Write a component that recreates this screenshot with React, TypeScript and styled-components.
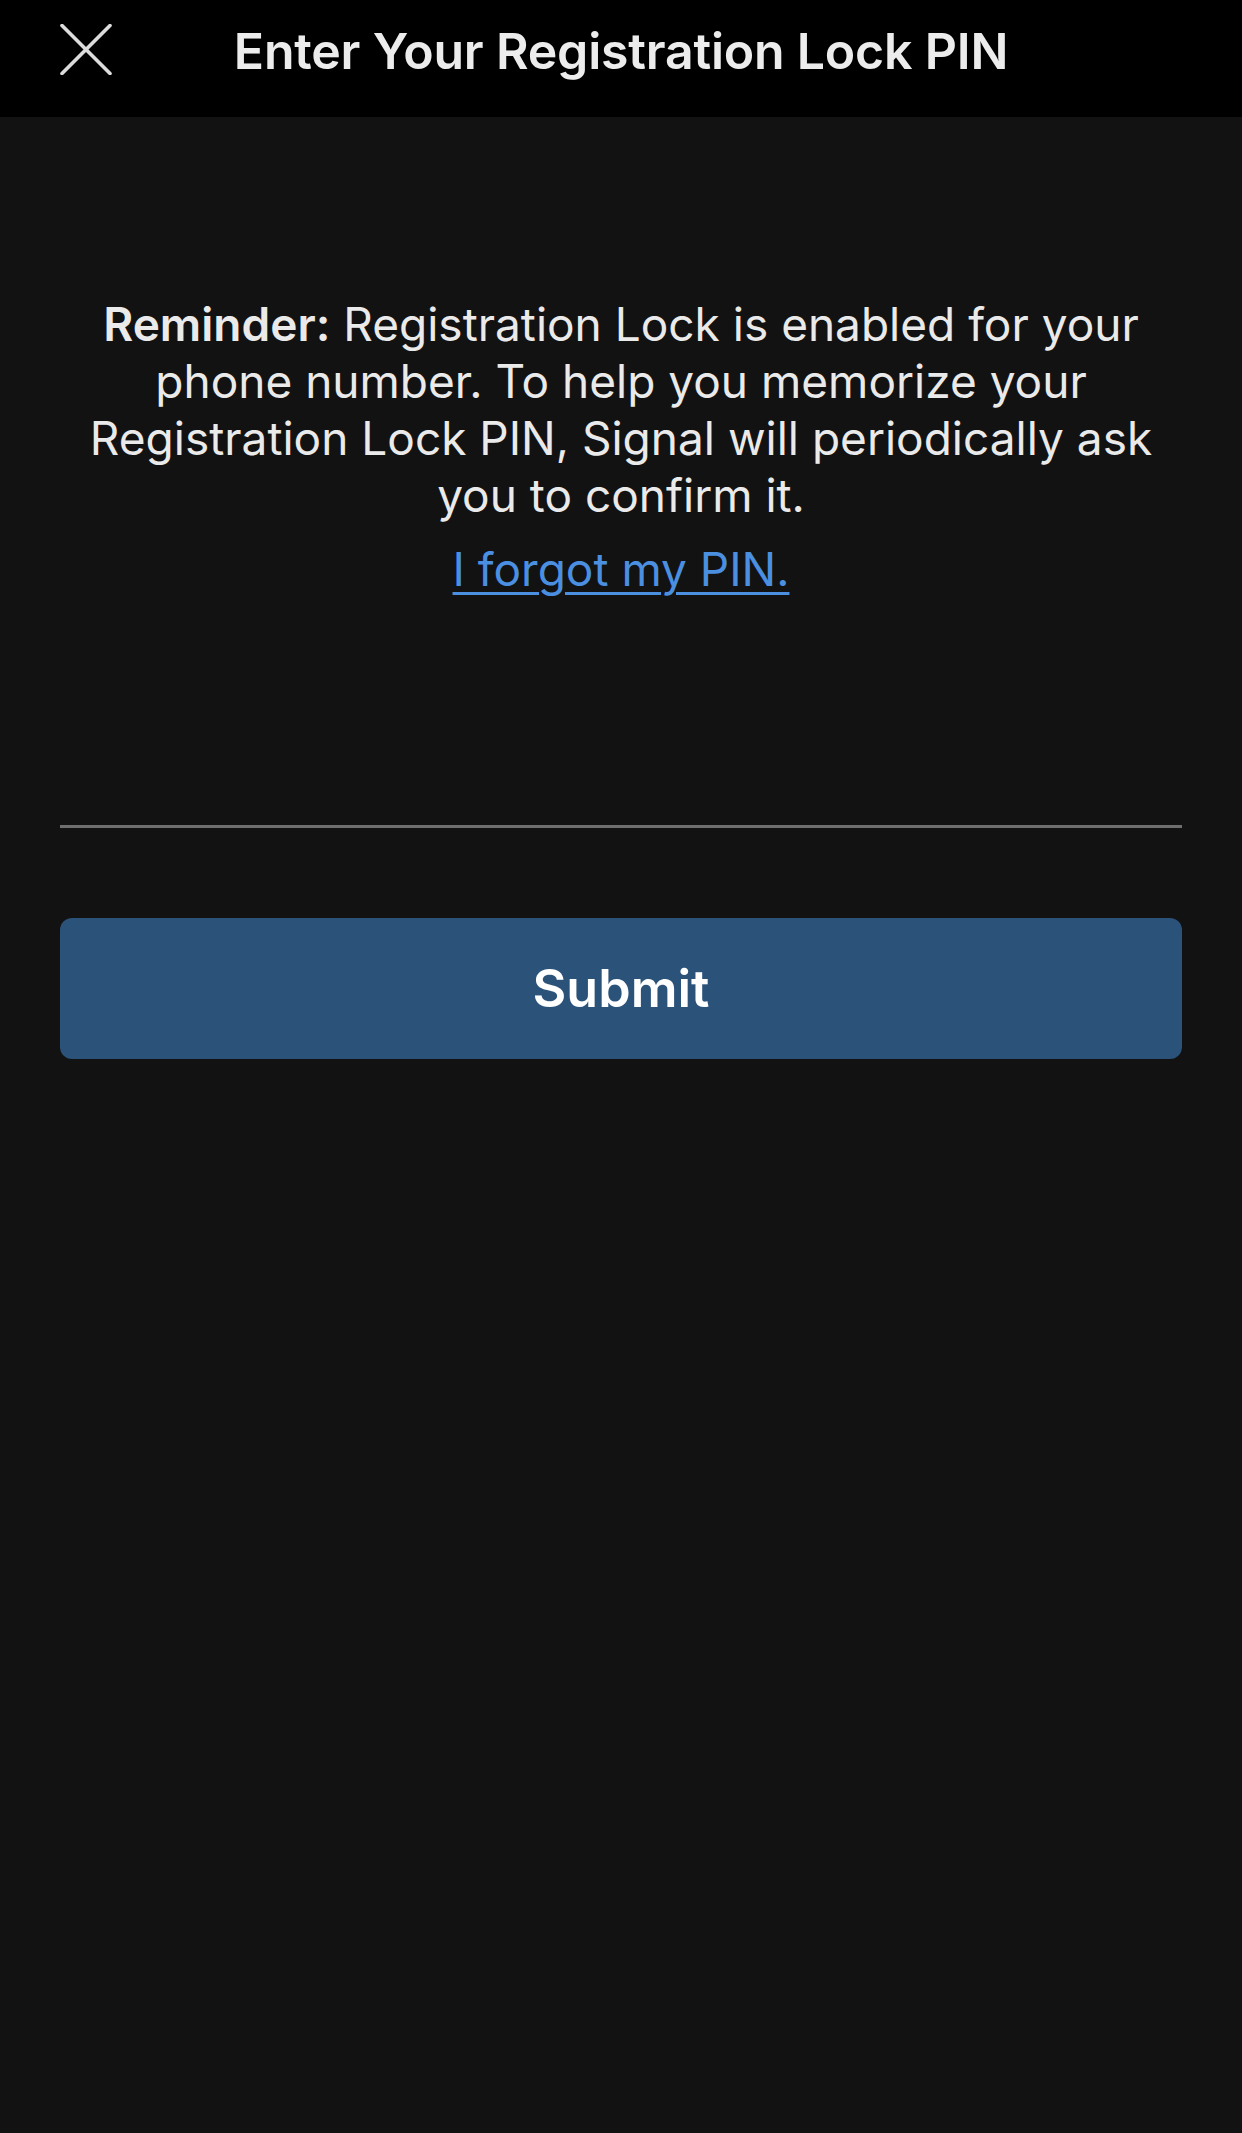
import { createGlobalStyle, styled } from 'styled-components';

const GlobalStyle = createGlobalStyle`
  html, body {
    margin: 0;
    padding: 0;
    background: #121212;
  }
  body {
    font-family: Inter, 'Noto Sans', 'Liberation Sans', sans-serif;
    color: #ebebeb;
  }
`;

export default function App() {
  return (
    <>
      <GlobalStyle />
      <Screen>
        <Header>
          <CloseButton aria-label="Close">
            <svg width="52" height="51" viewBox="0 0 52 51">
              <path d="M2 1.5 L50 49.5 M50 1.5 L2 49.5" stroke="#dcdcdc" strokeWidth="3.6" strokeLinecap="round" />
            </svg>
          </CloseButton>
          <Title>Enter Your Registration Lock PIN</Title>
        </Header>
        <Content>
          <Reminder>
            <strong>Reminder:</strong> Registration Lock is enabled for your phone number. To help you memorize your
            Registration Lock PIN, Signal will periodically ask you to confirm it.
          </Reminder>
          <ForgotLink href="#">I forgot my PIN.</ForgotLink>
          <PinInput type="password" inputMode="numeric" aria-label="PIN" />
          <SubmitButton>Submit</SubmitButton>
        </Content>
      </Screen>
    </>
  );
}

const Screen = styled.div`
  width: 1242px;
  min-height: 2133px;
  background: #121212;
  display: flex;
  flex-direction: column;
`;

const Header = styled.header`
  position: relative;
  height: 117px;
  background: #000;
  display: flex;
  align-items: center;
  justify-content: center;
`;

const CloseButton = styled.button`
  position: absolute;
  left: 60px;
  top: 24px;
  padding: 0;
  border: none;
  background: none;
  display: flex;
  cursor: pointer;
`;

const Title = styled.h1`
  margin: 0 0 16px;
  font-size: 50px;
  font-weight: 600;
  letter-spacing: -0.2px;
  color: #ececec;
`;

const Content = styled.main`
  display: flex;
  flex-direction: column;
  align-items: center;
  padding: 179px 60px 0;
`;

const Reminder = styled.p`
  margin: 0;
  font-size: 46px;
  line-height: 57px;
  text-align: center;
  color: #eaeaea;

  strong {
    font-weight: 600;
  }
`;

const ForgotLink = styled.a`
  margin-top: 17px;
  font-size: 46px;
  line-height: 57px;
  color: #4b8fe0;
  text-decoration: underline;
  text-decoration-thickness: 3px;
  text-underline-offset: 6px;
`;

const PinInput = styled.input`
  align-self: stretch;
  margin-top: 117px;
  height: 110px;
  padding: 0;
  border: none;
  border-bottom: 3px solid #6e6e6e;
  background: transparent;
  color: #eaeaea;
  font-size: 50px;
  text-align: center;
  outline: none;
`;

const SubmitButton = styled.button`
  align-self: stretch;
  margin-top: 90px;
  height: 141px;
  border: none;
  border-radius: 12px;
  background: #2b5279;
  color: #fff;
  font-family: Inter, 'Noto Sans', 'Liberation Sans', sans-serif;
  font-size: 52px;
  font-weight: 600;
  cursor: pointer;
`;
